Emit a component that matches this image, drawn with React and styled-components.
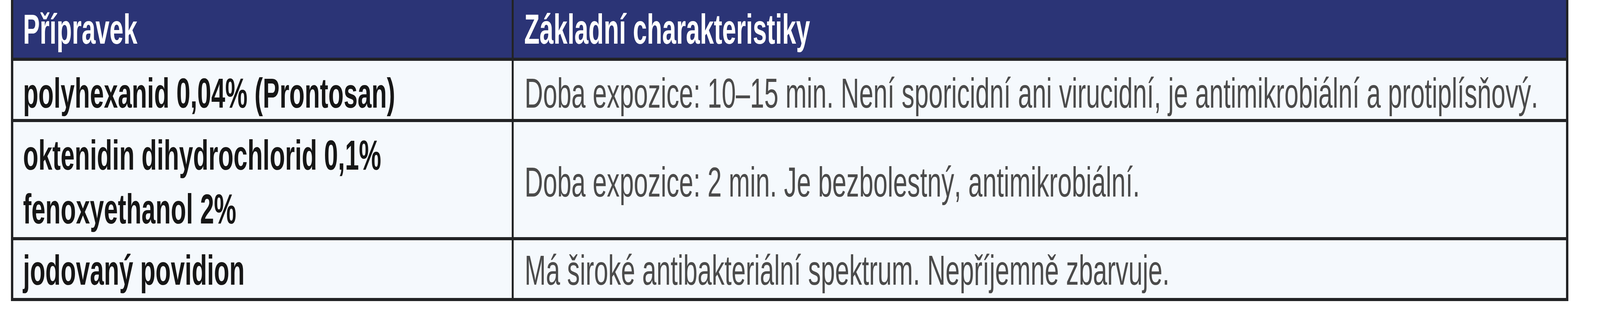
import { useEffect, useState } from "react";
import styled, { createGlobalStyle } from "styled-components";

// the reference is laid out on a 6200px wide sheet; horizontal sizes are
// expressed in sheet units so the table keeps its proportions in any window
const GlobalStyle = createGlobalStyle`
  :root {
    --u: calc(100vw / 6200);
  }
  body {
    margin: 0;
    background: #ffffff;
    font-family: "Liberation Sans", Arial, sans-serif;
    overflow: hidden;
  }
`;

const Page = styled.div`
  width: 100vw;
  height: 800px;
  padding-left: calc(43 * var(--u));
  box-sizing: border-box;
  overflow: hidden;
`;

const Table = styled.div`
  display: grid;
  grid-template-columns: calc(1931 * var(--u)) calc(4078 * var(--u));
  grid-template-rows: 148px 149px 295px 148px;
  row-gap: 8px;
  column-gap: calc(8 * var(--u));
  padding: 0 calc(9 * var(--u)) 8px calc(9 * var(--u));
  width: calc(6035 * var(--u));
  box-sizing: border-box;
  background: #222325;
`;

const HeaderCell = styled.div`
  background: #2b3476;
  color: #ffffff;
  font-weight: 700;
  font-size: 108px;
  display: flex;
  align-items: center;
  padding-left: calc(${(p) => (p.$wide ? 40 : 37)} * var(--u));
  white-space: nowrap;
  overflow: hidden;
`;

const Cell = styled.div`
  background: #f5f9fd;
  display: flex;
  align-items: center;
  padding-left: calc(${(p) => (p.$name ? 37 : 42)} * var(--u));
  padding-top: ${(p) => p.$shift || 0}px;
  font-size: 108px;
  line-height: 138px;
  white-space: nowrap;
  overflow: hidden;
  color: ${(p) => (p.$name ? "#161616" : "#4b4b4b")};
  font-weight: ${(p) => (p.$name ? 700 : 400)};
`;

// the print face is a condensed sans: Liberation Sans narrowed to match
const Narrow = styled.span`
  display: inline-block;
  transform-origin: left center;
`;

const rows = [
  {
    name: ["polyhexanid 0,04% (Prontosan)"],
    desc: "Doba expozice: 10–15 min. Není sporicidní ani virucidní, je antimikrobiální a protiplísňový.",
    shift: 16,
  },
  {
    name: ["oktenidin dihydrochlorid 0,1%", "fenoxyethanol 2%"],
    desc: "Doba expozice: 2 min. Je bezbolestný, antimikrobiální.",
    shift: 12,
  },
  {
    name: ["jodovaný povidion"],
    desc: "Má široké antibakteriální spektrum. Nepříjemně zbarvuje.",
    shift: 6,
  },
];

function useSheetRatio() {
  const [ratio, setRatio] = useState(() => window.innerWidth / 6200);
  useEffect(() => {
    const onResize = () => setRatio(window.innerWidth / 6200);
    window.addEventListener("resize", onResize);
    return () => window.removeEventListener("resize", onResize);
  }, []);
  return ratio;
}

export default function App() {
  const ratio = useSheetRatio();
  const bold = { transform: `scaleX(${0.9 * ratio})` };
  const regular = { transform: `scaleX(${0.915 * ratio})` };

  return (
    <Page>
      <GlobalStyle />
      <Table>
        <HeaderCell>
          <Narrow style={bold}>Přípravek</Narrow>
        </HeaderCell>
        <HeaderCell $wide>
          <Narrow style={bold}>Základní charakteristiky</Narrow>
        </HeaderCell>
        {rows.map((r) => [
          <Cell $name $shift={r.shift} key={r.name[0]}>
            <Narrow style={bold}>
              {r.name.map((line) => (
                <div key={line}>{line}</div>
              ))}
            </Narrow>
          </Cell>,
          <Cell $shift={r.shift} key={r.desc}>
            <Narrow style={regular}>{r.desc}</Narrow>
          </Cell>,
        ])}
      </Table>
    </Page>
  );
}
